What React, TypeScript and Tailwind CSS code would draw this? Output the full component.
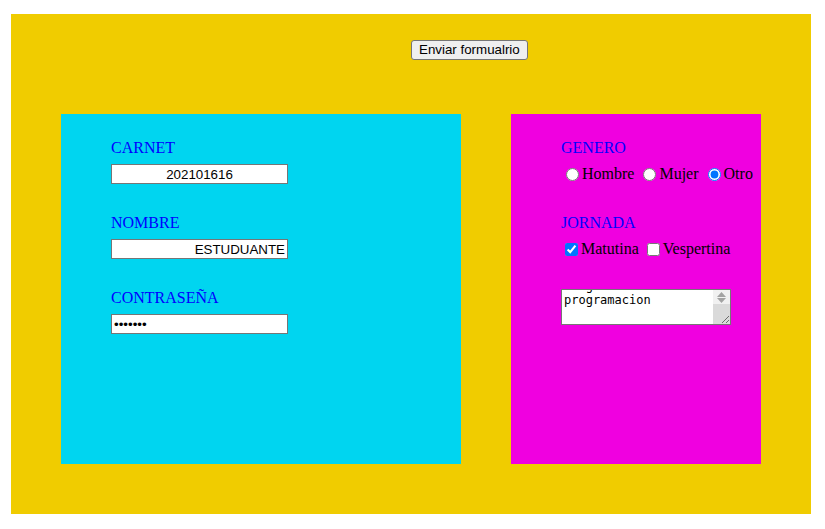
import { useEffect, useRef } from "react";

function Field({ label, children }: { label: string; children: React.ReactNode }) {
    return (
        <div className="flex flex-col">
            <span className="h-[18px] leading-[18px] text-[16px] text-[#0000ff]">{label}</span>
            <div className="mt-[7px] h-[20px]">{children}</div>
        </div>
    );
}

const inputCls =
    "block w-[177px] h-[20px] bg-white border border-[#767676] px-[2px] text-[13.33px] text-black font-['Liberation_Sans',Arial,sans-serif] outline-none";

export default function App() {
    const areaRef = useRef<HTMLTextAreaElement>(null);

    useEffect(() => {
        if (areaRef.current) areaRef.current.scrollTop = areaRef.current.scrollHeight;
    }, []);

    return (
        <div className="pt-[14px] pl-[11px] bg-white min-h-[529px] font-['Liberation_Serif','Times_New_Roman',serif]">
            <div className="w-[800px] h-[500px] bg-[#f0cc00] pt-[26px]">
                <button className="block ml-[400px] h-[20px] px-[7px] bg-[#efefef] border border-[#767676] rounded-[3px] text-[13.33px] leading-[16px] text-black font-['Liberation_Sans',Arial,sans-serif]">
                    Enviar formualrio
                </button>

                <div className="mt-[54px] ml-[50px] flex gap-[50px]">
                    <div className="w-[400px] h-[350px] bg-[#00d5f0] pt-[25px] pl-[50px] flex flex-col gap-[30px]">
                        <Field label="CARNET">
                            <input className={`${inputCls} text-center`} defaultValue="202101616" />
                        </Field>
                        <Field label="NOMBRE">
                            <input className={`${inputCls} text-right`} defaultValue="ESTUDUANTE" />
                        </Field>
                        <Field label="CONTRASEÑA">
                            <input type="password" className={inputCls} defaultValue="1234567" />
                        </Field>
                    </div>

                    <div className="w-[250px] h-[350px] bg-[#f000e0] pt-[25px] pl-[50px] flex flex-col gap-[30px]">
                        <Field label="GENERO">
                            <div className="flex items-center h-[20px] text-[16px] leading-[18px] text-black whitespace-nowrap">
                                <input type="radio" name="genero" className="ml-[5px] mr-[3px] w-[13px] h-[13px]" />
                                <span>Hombre</span>
                                <input type="radio" name="genero" className="ml-[9px] mr-[3px] w-[13px] h-[13px]" />
                                <span>Mujer</span>
                                <input type="radio" name="genero" defaultChecked className="ml-[9px] mr-[3px] w-[13px] h-[13px]" />
                                <span>Otro</span>
                            </div>
                        </Field>
                        <Field label="JORNADA">
                            <div className="flex items-center h-[20px] text-[16px] leading-[18px] text-black whitespace-nowrap">
                                <input type="checkbox" defaultChecked className="ml-[4px] mr-[3px] w-[13px] h-[13px]" />
                                <span>Matutina</span>
                                <input type="checkbox" className="ml-[8px] mr-[3px] w-[13px] h-[13px]" />
                                <span>Vespertina</span>
                            </div>
                        </Field>
                        <div className="relative w-[170px] h-[36px]">
                            <textarea
                                ref={areaRef}
                                className="block w-[170px] h-[36px] bg-white border border-[#767676] pl-[2px] pt-[2px] pb-[3px] pr-[19px] text-[12px] leading-[14px] text-black font-['DejaVu_Sans_Mono',monospace] overflow-hidden resize-none outline-none"
                                defaultValue={"Me gusta la\nprogramacion\n"}
                            />
                            <div className="absolute right-[1px] top-[1px] bottom-[1px] w-[17px] flex flex-col bg-[#f1f1f1]">
                                <div className="h-[7px] flex items-end justify-center">
                                    <svg width="9" height="5" viewBox="0 0 9 5"><path d="M0 5 L4.5 0 L9 5 Z" fill="#a3a3a3" /></svg>
                                </div>
                                <div className="h-[7px] flex items-center justify-center">
                                    <svg width="9" height="5" viewBox="0 0 9 5"><path d="M0 0 L4.5 5 L9 0 Z" fill="#a3a3a3" /></svg>
                                </div>
                                <div className="flex-1 bg-[#dadada] relative">
                                    <svg className="absolute right-0 bottom-0" width="11" height="11" viewBox="0 0 11 11">
                                        <path d="M10 3 L3 10 M10 7 L7 10" stroke="#6b6b6b" strokeWidth="1" />
                                    </svg>
                                </div>
                            </div>
                        </div>
                    </div>
                </div>
            </div>
        </div>
    );
}
